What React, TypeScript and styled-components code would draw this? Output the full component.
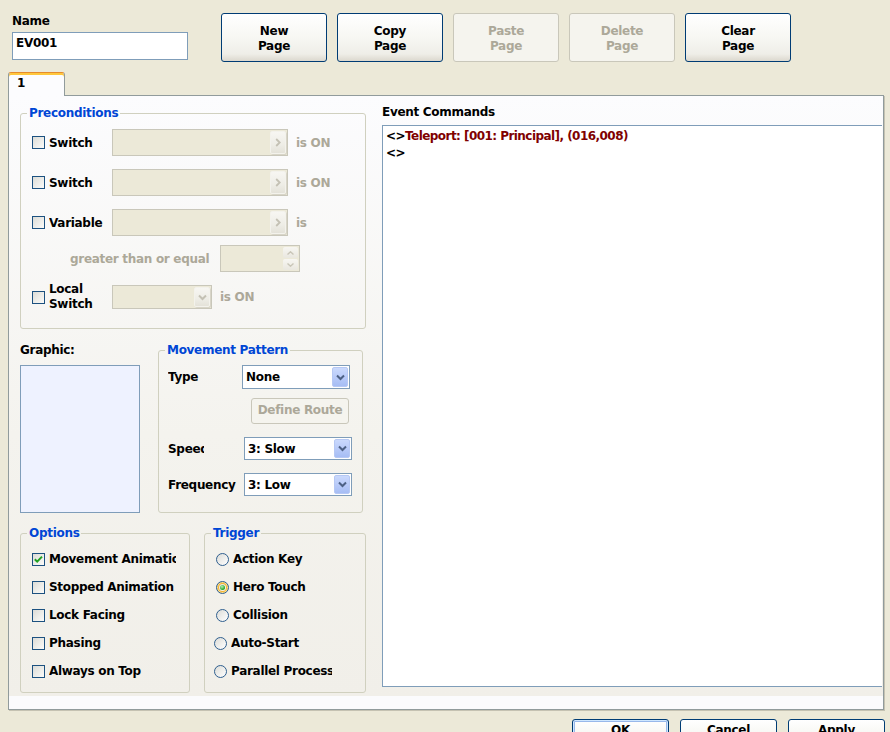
import React from 'react';
import styled, { createGlobalStyle } from 'styled-components';

const GlobalStyle = createGlobalStyle`
  html, body {
    margin: 0;
    padding: 0;
    background: #ece9d8;
  }
  body {
    font-family: "DejaVu Sans", Verdana, sans-serif;
    font-size: 12px;
    font-weight: bold;
    letter-spacing: -0.3px;
    line-height: 14px;
    color: #000;
  }
`;

const Window = styled.div`
  width: 890px;
  height: 732px;
  overflow: hidden;
  background: #ece9d8;
`;

const TopBar = styled.div`
  display: flex;
  align-items: flex-start;
  height: 62px;
  padding: 13px 0 0 12px;
  box-sizing: border-box;
`;

const NameColumn = styled.div`
  display: flex;
  flex-direction: column;
  width: 176px;
  margin-top: 1px;
`;

const TextBox = styled.div`
  margin-top: 4px;
  height: 28px;
  box-sizing: border-box;
  border: 1px solid #7f9db9;
  background: #fff;
  padding: 3px 0 0 3px;
`;

const PageButtons = styled.div`
  display: flex;
  gap: 10px;
  margin-left: 33px;
`;

const XPButton = styled.div<{ $w: number; $h: number; $pt: number; $disabled?: boolean; $default?: boolean }>`
  flex: none;
  box-sizing: border-box;
  width: ${(p) => p.$w}px;
  height: ${(p) => p.$h}px;
  padding-top: ${(p) => p.$pt}px;
  border: 1px solid ${(p) => (p.$disabled ? '#c9c7ba' : '#003c74')};
  border-radius: 3px;
  background: ${(p) =>
    p.$disabled
      ? '#f5f4ee'
      : 'linear-gradient(180deg, #ffffff 0%, #f7f7f3 50%, #efeee8 85%, #dcd8ce 100%)'};
  color: ${(p) => (p.$disabled ? '#aca899' : '#000')};
  text-align: center;
  line-height: 15px;
  ${(p) => p.$default && 'box-shadow: inset 0 0 0 1px #cee7ff, inset 0 0 0 2px #98b8ea;'}
`;

const TabStrip = styled.div`
  display: flex;
  margin-top: 10px;
  padding-left: 8px;
`;

const Tab = styled.div`
  position: relative;
  z-index: 1;
  width: 57px;
  height: 24px;
  margin-bottom: -1px;
  box-sizing: border-box;
  border: 1px solid #919b9c;
  border-top-color: #e68b2c;
  border-bottom: none;
  border-radius: 3px 3px 0 0;
  box-shadow: inset 0 2px 0 #ffc73c;
  background: #fcfcfe;
  padding: 3px 0 0 8px;
`;

const Panel = styled.div`
  display: flex;
  align-items: flex-start;
  width: 876px;
  height: 615px;
  margin-left: 8px;
  box-sizing: border-box;
  border: 1px solid #919b9c;
  box-shadow: 1px 1px 0 #c5c2b2;
  background: linear-gradient(180deg, #fcfcfe 0%, #f4f3ee 55%, #f1efe9 97.9%, #fbfbfd 97.9%);
  padding: 9px 0 0 11px;
`;

const LeftColumn = styled.div`
  display: flex;
  flex-direction: column;
  width: 346px;
  margin-top: 1px;
`;

const Group = styled.fieldset<{ $w: number; $ml?: number }>`
  margin: 0 0 0 ${(p) => p.$ml ?? 0}px;
  padding: 0;
  min-width: 0;
  width: ${(p) => p.$w}px;
  box-sizing: border-box;
  border: 1px solid #d0d0bf;
  border-radius: 3px;
`;

const Legend = styled.legend`
  margin-left: 6px;
  padding: 0 2px;
  color: #0046d5;
  line-height: 14px;
`;

const GroupBody = styled.div<{ $pad: string }>`
  display: flex;
  flex-direction: column;
  padding: ${(p) => p.$pad};
`;

const Row = styled.div<{ $h: number; $mt?: number; $ml?: number }>`
  display: flex;
  align-items: center;
  height: ${(p) => p.$h}px;
  margin-top: ${(p) => p.$mt ?? 0}px;
  margin-left: ${(p) => p.$ml ?? 0}px;
`;

const SplitRow = styled.div<{ $mt: number }>`
  display: flex;
  align-items: flex-start;
  margin-top: ${(p) => p.$mt}px;
`;

const Label = styled.span<{ $w?: number; $ml?: number; $muted?: boolean; $lh?: number }>`
  flex: none;
  ${(p) => (p.$w !== undefined ? `width: ${p.$w}px;` : '')}
  margin-left: ${(p) => p.$ml ?? 0}px;
  color: ${(p) => (p.$muted ? '#aca899' : '#000')};
  line-height: ${(p) => p.$lh ?? 14}px;
  white-space: nowrap;
  overflow: hidden;
`;

const Check = styled.span`
  flex: none;
  display: flex;
  align-items: center;
  justify-content: center;
  width: 13px;
  height: 13px;
  box-sizing: border-box;
  margin-right: 4px;
  border: 1px solid #1c5180;
  background: linear-gradient(135deg, #dcdcd7 0%, #fbfbf9 100%);
`;

const Radio = styled.span<{ $on?: boolean }>`
  flex: none;
  position: relative;
  width: 13px;
  height: 13px;
  box-sizing: border-box;
  margin-right: 4px;
  border-radius: 50%;
  border: 1px solid #2f5f8f;
  background: linear-gradient(135deg, #dcdcd7 0%, #ffffff 100%);
  ${(p) =>
    p.$on &&
    `
    box-shadow: inset 0 0 0 1px #fbe08a, inset 0 0 0 2px #f3b030;
    &::after {
      content: '';
      position: absolute;
      left: 3px;
      top: 3px;
      width: 5px;
      height: 5px;
      border-radius: 50%;
      background: radial-gradient(circle at 40% 35%, #b4f0b4 0%, #21a121 70%);
    }
  `}
`;

const Combo = styled.div<{ $w: number; $h: number; $disabled?: boolean }>`
  flex: none;
  display: flex;
  align-items: stretch;
  justify-content: space-between;
  width: ${(p) => p.$w}px;
  height: ${(p) => p.$h}px;
  box-sizing: border-box;
  padding: 1px;
  border: 1px solid ${(p) => (p.$disabled ? '#c9c7ba' : '#7f9db9')};
  background: ${(p) => (p.$disabled ? '#ece9d8' : '#fff')};
`;

const ComboText = styled.span`
  align-self: center;
  padding-left: 2px;
`;

const DropButton = styled.span<{ $disabled?: boolean }>`
  flex: none;
  display: flex;
  align-items: center;
  justify-content: center;
  width: 16px;
  box-sizing: border-box;
  border-radius: 2px;
  border: 1px solid ${(p) => (p.$disabled ? '#f3f2ec' : '#b6c8f4')};
  background: ${(p) =>
    p.$disabled
      ? 'linear-gradient(180deg, #f7f6f2 0%, #eeede6 60%, #e4e2d9 100%)'
      : 'linear-gradient(180deg, #cad9fd 0%, #b9cbf9 50%, #a6bdf4 100%)'};
  box-shadow: ${(p) => (p.$disabled ? '1px 1px 0 #d8d5c8' : 'none')};
`;

const Spinner = styled.div`
  flex: none;
  display: flex;
  justify-content: flex-end;
  width: 80px;
  height: 27px;
  box-sizing: border-box;
  padding: 1px;
  border: 1px solid #c9c7ba;
  background: #ece9d8;
`;

const SpinColumn = styled.div`
  display: flex;
  flex-direction: column;
  gap: 1px;
  width: 15px;
`;

const SpinButton = styled.span`
  flex: 1;
  display: flex;
  align-items: center;
  justify-content: center;
  border-radius: 2px;
  background: linear-gradient(180deg, #f7f6f2 0%, #e9e7df 100%);
`;

const GraphicColumn = styled.div`
  display: flex;
  flex-direction: column;
  width: 120px;
`;

const Preview = styled.div`
  margin-top: 8px;
  height: 148px;
  box-sizing: border-box;
  border: 1px solid #7f9db9;
  background: #eef2ff;
`;

const CommandsColumn = styled.div`
  display: flex;
  flex-direction: column;
  width: 500px;
  margin-left: 16px;
`;

const CommandList = styled.div`
  margin-top: 6px;
  height: 562px;
  box-sizing: border-box;
  border: 1px solid #7f9db9;
  border-right: none;
  background: #fff;
  padding: 2px 0 0 3px;
  line-height: 17px;
  letter-spacing: -0.55px;
`;

const CommandText = styled.span`
  color: #800000;
`;

const DialogButtons = styled.div`
  display: flex;
  justify-content: flex-end;
  gap: 11px;
  margin-top: 9px;
  padding-right: 5px;
`;

const ChevronDown = ({ color }: { color: string }) => (
  <svg width="9" height="7" viewBox="0 0 9 7">
    <path d="M1 1.5 L4.5 5 L8 1.5" fill="none" stroke={color} strokeWidth="2" />
  </svg>
);

const ChevronRight = ({ color }: { color: string }) => (
  <svg width="6" height="9" viewBox="0 0 6 9">
    <path d="M1.2 1 L4.7 4.5 L1.2 8" fill="none" stroke={color} strokeWidth="1.8" />
  </svg>
);

const SpinArrow = ({ up }: { up?: boolean }) => (
  <svg width="7" height="4" viewBox="0 0 7 4">
    <path d={up ? 'M0.5 3.5 L3.5 0.8 L6.5 3.5' : 'M0.5 0.5 L3.5 3.2 L6.5 0.5'} fill="none" stroke="#c9c6b8" strokeWidth="1.4" />
  </svg>
);

const CheckMark = () => (
  <svg width="11" height="11" viewBox="0 0 11 11">
    <path d="M1.8 5.2 L4.2 7.6 L9 2.6" fill="none" stroke="#21a121" strokeWidth="2" />
  </svg>
);

const PickerCombo = () => (
  <Combo $w={176} $h={27} $disabled>
    <span />
    <DropButton $disabled>
      <ChevronRight color="#c4c1b4" />
    </DropButton>
  </Combo>
);

const Select = ({ value, w, h }: { value: string; w: number; h: number }) => (
  <Combo $w={w} $h={h}>
    <ComboText>{value}</ComboText>
    <DropButton>
      <ChevronDown color="#4d6185" />
    </DropButton>
  </Combo>
);

const options = [
  { label: 'Movement Animation', on: true },
  { label: 'Stopped Animation', on: false },
  { label: 'Lock Facing', on: false },
  { label: 'Phasing', on: false },
  { label: 'Always on Top', on: false },
];

const triggers = [
  { label: 'Action Key', on: false, shift: 0 },
  { label: 'Hero Touch', on: true, shift: 0 },
  { label: 'Collision', on: false, shift: 0 },
  { label: 'Auto-Start', on: false, shift: -2 },
  { label: 'Parallel Process', on: false, shift: -2 },
];

export default function App() {
  return (
    <Window>
      <GlobalStyle />
      <TopBar>
        <NameColumn>
          <Label>Name</Label>
          <TextBox>EV001</TextBox>
        </NameColumn>
        <PageButtons>
          <XPButton $w={106} $h={49} $pt={10}>New<br />Page</XPButton>
          <XPButton $w={106} $h={49} $pt={10}>Copy<br />Page</XPButton>
          <XPButton $w={106} $h={49} $pt={10} $disabled>Paste<br />Page</XPButton>
          <XPButton $w={106} $h={49} $pt={10} $disabled>Delete<br />Page</XPButton>
          <XPButton $w={106} $h={49} $pt={10}>Clear<br />Page</XPButton>
        </PageButtons>
      </TopBar>

      <TabStrip>
        <Tab>1</Tab>
      </TabStrip>

      <Panel>
        <LeftColumn>
          <Group $w={346}>
            <Legend>Preconditions</Legend>
            <GroupBody $pad="9px 0 19px 11px">
              <Row $h={27}>
                <Check />
                <Label $w={63}>Switch</Label>
                <PickerCombo />
                <Label $ml={8} $muted>is ON</Label>
              </Row>
              <Row $h={27} $mt={13}>
                <Check />
                <Label $w={63}>Switch</Label>
                <PickerCombo />
                <Label $ml={8} $muted>is ON</Label>
              </Row>
              <Row $h={27} $mt={13}>
                <Check />
                <Label $w={63}>Variable</Label>
                <PickerCombo />
                <Label $ml={8} $muted>is</Label>
              </Row>
              <Row $h={27} $mt={9}>
                <Label $ml={38} $w={150} $muted>greater than or equal</Label>
                <Spinner>
                  <SpinColumn>
                    <SpinButton><SpinArrow up /></SpinButton>
                    <SpinButton><SpinArrow /></SpinButton>
                  </SpinColumn>
                </Spinner>
              </Row>
              <Row $h={24} $mt={13}>
                <Check />
                <Label $w={63} $lh={15}>Local<br />Switch</Label>
                <Combo $w={100} $h={24} $disabled>
                  <span />
                  <DropButton $disabled>
                    <ChevronDown color="#c4c1b4" />
                  </DropButton>
                </Combo>
                <Label $ml={8} $muted>is ON</Label>
              </Row>
            </GroupBody>
          </Group>

          <SplitRow $mt={14}>
            <GraphicColumn>
              <Label>Graphic:</Label>
              <Preview />
            </GraphicColumn>
            <Group $w={205} $ml={18}>
              <Legend>Movement Pattern</Legend>
              <GroupBody $pad="8px 0 16px 9px">
                <Row $h={24}>
                  <Label $w={74}>Type</Label>
                  <Select value="None" w={108} h={24} />
                </Row>
                <Row $h={26} $mt={9} $ml={83}>
                  <XPButton $w={98} $h={26} $pt={4} $disabled>Define Route</XPButton>
                </Row>
                <Row $h={23} $mt={13}>
                  <Label $w={36}>Speed</Label>
                  <Label $w={40} />
                  <Select value="3: Slow" w={108} h={23} />
                </Row>
                <Row $h={23} $mt={13}>
                  <Label $w={76}>Frequency</Label>
                  <Select value="3: Low" w={108} h={23} />
                </Row>
              </GroupBody>
            </Group>
          </SplitRow>

          <SplitRow $mt={13}>
            <Group $w={170}>
              <Legend>Options</Legend>
              <GroupBody $pad="5px 0 7px 11px">
                {options.map((o) => (
                  <Row $h={28} key={o.label}>
                    <Check>{o.on && <CheckMark />}</Check>
                    <Label $w={127}>{o.label}</Label>
                  </Row>
                ))}
              </GroupBody>
            </Group>
            <Group $w={162} $ml={14}>
              <Legend>Trigger</Legend>
              <GroupBody $pad="5px 0 7px 11px">
                {triggers.map((t) => (
                  <Row $h={28} $ml={t.shift} key={t.label}>
                    <Radio $on={t.on} />
                    <Label $w={101}>{t.label}</Label>
                  </Row>
                ))}
              </GroupBody>
            </Group>
          </SplitRow>
        </LeftColumn>

        <CommandsColumn>
          <Label>Event Commands</Label>
          <CommandList>
            <div>
              {'<>'}
              <CommandText>Teleport: [001: Principal], (016,008)</CommandText>
            </div>
            <div>{'<>'}</div>
          </CommandList>
        </CommandsColumn>
      </Panel>

      <DialogButtons>
        <XPButton $w={97} $h={30} $pt={3} $default>OK</XPButton>
        <XPButton $w={97} $h={30} $pt={3}>Cancel</XPButton>
        <XPButton $w={97} $h={30} $pt={3}>Apply</XPButton>
      </DialogButtons>
    </Window>
  );
}
